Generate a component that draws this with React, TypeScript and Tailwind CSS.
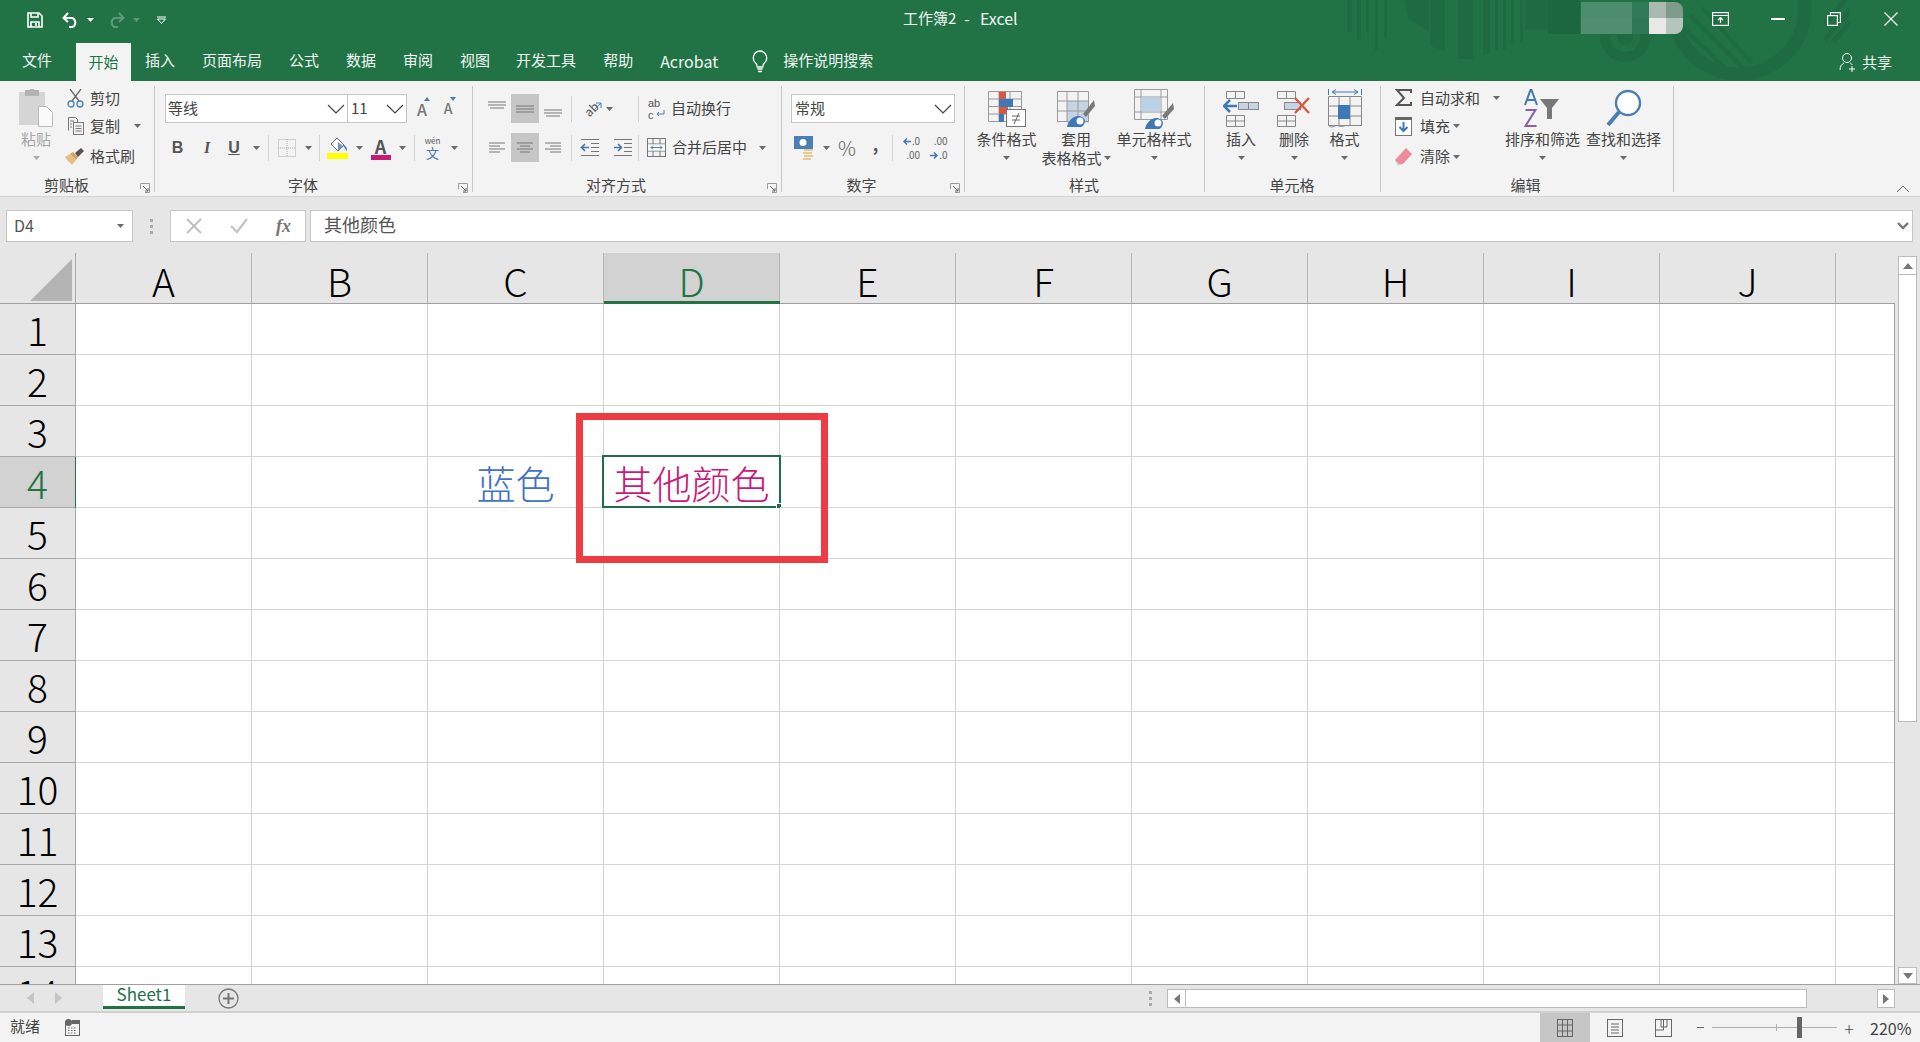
import React from "react";

const Caret = ({ c = "#6a6a6a" }: { c?: string }) => (
  <svg width="7" height="4" viewBox="0 0 7 4" className="shrink-0"><path d="M0 0h7L3.5 4z" fill={c} /></svg>
);
const Chev = () => (
  <svg width="18" height="10" viewBox="0 0 18 10" className="shrink-0"><path d="M1 1l8 8 8-8" fill="none" stroke="#444" strokeWidth="1.2" /></svg>
);
const Sep = () => <div className="w-px h-[26px] bg-[#d2d2d2] shrink-0" />;
const C = ({ w, children, hl }: { w: string; children?: React.ReactNode; hl?: boolean }) => (
  <div className={`${w} h-full shrink-0 flex items-center justify-center ${hl ? "bg-[#c6c6c6]" : ""}`}>{children}</div>
);
const Launcher = () => (
  <svg width="10" height="10" viewBox="0 0 10 10" className="absolute right-[4px] top-[97px]">
    <path d="M0.5 6V0.5H9.5V9.5H5" fill="none" stroke="#9a9a9a" />
    <path d="M3 3l5 5M8 5v3H5" fill="none" stroke="#666" />
  </svg>
);
const Group = ({ w, lw, label, launcher, children }: { w: string; lw: string; label: string; launcher?: boolean; children: React.ReactNode }) => (
  <div className={`${w} relative shrink-0 mt-[5px] h-[106px] border-r border-[#c8c8c8]`}>
    <div className="h-[90px]">{children}</div>
    <div className={`${lw} h-[18px] flex items-center justify-center text-[#444]`}>{label}</div>
    {launcher && <Launcher />}
  </div>
);
const Big = ({ w, icon, children, label2 }: { w: string; icon: React.ReactNode; children: React.ReactNode; label2?: React.ReactNode }) => (
  <div className={`${w} shrink-0 flex flex-col items-center`}>
    <div className="h-[44px] pt-[2px] flex items-center justify-center">{icon}</div>
    <div className="h-[18px] flex items-center whitespace-nowrap">{children}</div>
    <div className="h-[20px] flex items-center whitespace-nowrap">{label2 ?? <Caret />}</div>
  </div>
);
const Lines = ({ d, h = 24 }: { d: string; h?: number }) => (
  <svg width="20" height={h} viewBox={`0 0 20 ${h}`}><path d={d} stroke="#777" strokeWidth="1" fill="none" /></svg>
);

const Save = () => (
  <svg width="16" height="16" viewBox="0 0 16 16" fill="none" stroke="#fff" strokeWidth="1.6">
    <path d="M1 1h11l3 3v11H1z" /><path d="M4 1v4h7V1M4 15v-5h8v5" /><path d="M9 11v3" />
  </svg>
);
const Undo = ({ c = "#fff" }: { c?: string }) => (
  <svg width="18" height="16" viewBox="0 0 18 16" fill="none" stroke={c} strokeWidth="2"><path d="M1.5 6h9a5 5 0 0 1 0 9H7" /><path d="M6 1L1.5 6 6 10" /></svg>
);
const Redo = () => (
  <svg width="18" height="16" viewBox="0 0 18 16" fill="none" stroke="#5d9a79" strokeWidth="2"><path d="M16.5 6h-9a5 5 0 0 0 0 9H11" /><path d="M12 1l4.5 5L12 10" /></svg>
);
const Paste = () => (
  <svg width="34" height="38" viewBox="0 0 34 38">
    <rect x="0" y="3" width="26" height="33" fill="#d6d5d5" />
    <rect x="6" y="1" width="14" height="6" fill="#b3b2b2" />
    <rect x="11" y="0" width="4" height="3" fill="#b3b2b2" />
    <path d="M19.5 17.5h8l6 6v14h-14z" fill="#fafafa" stroke="#bcbcbc" />
  </svg>
);
const Scissors = () => (
  <svg width="17" height="19" viewBox="0 0 17 19" fill="none">
    <path d="M3 0l9 12M14 0L5 12" stroke="#666" strokeWidth="1.3" />
    <circle cx="4" cy="15" r="3" stroke="#4a7eb5" strokeWidth="1.3" /><circle cx="13" cy="15" r="3" stroke="#4a7eb5" strokeWidth="1.3" />
  </svg>
);
const Copy = () => (
  <svg width="17" height="18" viewBox="0 0 17 18" fill="none" stroke="#777">
    <path d="M1.5 13.5V.5h7l2 2v3" /><rect x="6.5" y="5.5" width="10" height="12" fill="#f3f3f3" />
    <path d="M8.5 9h6M8.5 11.5h6M8.5 14h6M3 4h4M3 7h2M3 10h2" />
  </svg>
);
const Brush = () => (
  <svg width="20" height="17" viewBox="0 0 20 17">
    <path d="M0 9l5-3 6 6-4 5C5 14 2 13 0 9z" fill="#e9bd80" />
    <path d="M5 6l3-2 5 5-2 3z" fill="#d9a15c" /><path d="M10 5l6-5 3 3-6 6z" fill="#555" />
  </svg>
);
const BorderIco = () => (
  <svg width="18" height="18" viewBox="0 0 18 18" fill="none" stroke="#a8a8a8" strokeDasharray="1 1"><rect x=".5" y=".5" width="17" height="17" /><path d="M9 0v18M0 9h18" /></svg>
);
const FillIco = () => (
  <svg width="22" height="22" viewBox="0 0 22 22">
    <path d="M10 1l7 7-6 6-7-7z" fill="#fff" stroke="#666" /><path d="M16 8c2 0 4 2 4 5 0 1-1 1-1 0l-2-3z" fill="#4a7eb5" /><path d="M11 5l5 4-5 5" fill="#4a7eb5" opacity=".8" />
    <rect x="0" y="16" width="21" height="6" fill="#ffff00" />
  </svg>
);
const Merge = () => (
  <svg width="19" height="19" viewBox="0 0 19 19" fill="none" stroke="#777">
    <rect x=".5" y=".5" width="18" height="18" /><path d="M0 6h19M0 13h19M6 0v6M13 0v6M6 13v6M13 13v6" />
    <rect x="1" y="6.5" width="17" height="6" fill="#fff" stroke="none" />
    <path d="M4 9.5h11M6 7.5l-2 2 2 2M13 7.5l2 2-2 2" stroke="#4a7eb5" />
  </svg>
);
const Money = () => (
  <svg width="20" height="24" viewBox="0 0 20 24">
    <rect x="0" y="0" width="19" height="13" fill="#4a7eb5" /><circle cx="9" cy="6.5" r="3.5" fill="#fff" />
    <path d="M10 13h9v2h-9zM9 16h9v2H9zM10 19h9v2h-9zM9 22h8v2H9z" fill="#eac98f" />
  </svg>
);
const CondFmt = () => (
  <svg width="38" height="36" viewBox="0 0 38 36" fill="none">
    <path d="M.5.5h33v30H.5zM.5 8h33M.5 15.5h33M.5 23h33M11 0v30M22 0v30" stroke="#9a9a9a" />
    <rect x="11" y="1" width="7" height="7" fill="#d9583f" /><rect x="11" y="8" width="14" height="8" fill="#3f78b5" />
    <rect x="11" y="16" width="9" height="7" fill="#d9583f" /><rect x="11" y="23" width="5" height="8" fill="#3f78b5" />
    <rect x="18.5" y="18.5" width="19" height="17" fill="#fff" stroke="#777" /><path d="M24 25h8M24 29h8M31 22l-5 11" stroke="#666" />
  </svg>
);
const TableFmt = () => (
  <svg width="38" height="36" viewBox="0 0 38 36" fill="none">
    <rect x="10" y="10" width="22" height="22" fill="#c5d3e2" />
    <path d="M.5.5h31v30H.5zM.5 10h31M.5 20h31M10 0v31M21 0v31" stroke="#9a9a9a" />
    <path d="M37 9L26 23l3 3L38 15z" fill="#7a7a7a" />
    <path d="M10 36c1-6 6-11 11-11 3 0 7 2 7 5 0 2-2 6-4 6z" fill="#3f78b5" /><circle cx="23" cy="30" r="3.5" fill="#fff" />
  </svg>
);
const CellFmt = () => (
  <svg width="40" height="40" viewBox="0 0 40 40" fill="none">
    <path d="M.5.5h33v30H.5zM.5 8h33M.5 23h33M7 0v31M27 0v31" stroke="#9a9a9a" />
    <rect x="7.5" y="8.5" width="19" height="14" fill="#bcd0e6" />
    <path d="M39 14L28 27l3 3 9-10z" fill="#7a7a7a" />
    <path d="M11 40c1-6 6-11 11-11 3 0 7 2 7 5 0 2-2 6-4 6z" fill="#3f78b5" /><circle cx="24" cy="34" r="3.5" fill="#fff" />
  </svg>
);
const Insert = () => (
  <svg width="36" height="36" viewBox="0 0 36 36" fill="none" stroke="#888">
    <path d="M3.5 .5h18v7h-18zM12.5 0v7M3.5 24.5h18v11h-18zM3.5 30h18M12.5 24v12" />
    <rect x="15.5" y="11.5" width="20" height="7" fill="#c5d3e2" /><path d="M25.5 11v8" />
    <path d="M14 15H2M7 9l-6 6 6 6" stroke="#3f78b5" strokeWidth="2.5" />
  </svg>
);
const Delete = () => (
  <svg width="36" height="36" viewBox="0 0 36 36" fill="none" stroke="#888">
    <path d="M1.5 .5h18v7h-18zM10.5 0v7M1.5 24.5h18v11h-18zM1.5 30h18M10.5 24v12" />
    <rect x="8.5" y="11.5" width="16" height="7" fill="#c5d3e2" />
    <path d="M19 7l14 15M33 7L19 22" stroke="#d9583f" strokeWidth="2.4" />
  </svg>
);
const FormatI = () => (
  <svg width="34" height="40" viewBox="0 0 34 40" fill="none" stroke="#888">
    <path d="M.5 0v6M33.5 0v6" stroke="#3f78b5" /><path d="M4 3h26M8 .5L4 3l4 2.5M26 .5L30 3l-4 2.5" stroke="#3f78b5" />
    <path d="M.5 7.5h33v29H.5zM.5 17h33M.5 27h33M11 7v30M22 7v30" />
    <rect x="10" y="16" width="12" height="14" fill="#3f78b5" stroke="none" />
    <path d="M1 37c4 3 6-2 10 0s6-2 10 0" />
  </svg>
);
const Sigma = () => (
  <svg width="17" height="18" viewBox="0 0 17 18" fill="none"><path d="M16 4V1H2l7 8-7 7h14v-3" stroke="#555" strokeWidth="2" /></svg>
);
const FillDown = () => (
  <svg width="17" height="19" viewBox="0 0 17 19"><rect x=".5" y=".5" width="16" height="18" fill="#fff" stroke="#777" /><rect width="17" height="3" fill="#666" />
    <path d="M8.5 5v9M4.5 10l4 4 4-4" fill="none" stroke="#3f78b5" strokeWidth="2" /></svg>
);
const Eraser = () => (
  <svg width="17" height="18" viewBox="0 0 17 18"><path d="M11 0l6 6-9 10-5 1-3-5z" fill="#ec8b9b" /><path d="M0 12l5 5-2 1z" fill="#d8d8d8" /></svg>
);
const Funnel = () => (
  <svg width="38" height="40" viewBox="0 0 38 40" className="overflow-visible">
    <path d="M1 16L6.500 1h1L13 16M3 11h8" fill="none" stroke="#3f78b5" strokeWidth="2" />
    <path d="M1.500 21h10L1.500 37h11" fill="none" stroke="#8a5eab" strokeWidth="2" />
    <path d="M16 10h19l-7 9v11h-5V19z" fill="#777" />
  </svg>
);
const Search = () => (
  <svg width="36" height="40" viewBox="0 0 36 40" fill="none"><circle cx="22" cy="14" r="12" fill="#fff" stroke="#4a7eb5" strokeWidth="2.4" /><path d="M13 23L2 36" stroke="#4a7eb5" strokeWidth="4" /></svg>
);
const Person = () => (
  <svg width="18" height="20" viewBox="0 0 18 20" fill="none" stroke="#fff"><circle cx="8" cy="6" r="4.5" /><path d="M1 18c0-4 2-6 4-7M11 11c1 .5 2 1 2 2M13 14v6M10 17h6" /></svg>
);

const Pattern = () => (
  <svg width="520" height="81" viewBox="0 0 520 81" className="absolute left-[1330px] top-0" fill="#1f6b41">
    <path d="M17 0h5v32h-5zM27 0h4v40h-4zM36 0h3v32h-3zM45 0h3v50h-3zM54 0h3v38h-3z" />
    <path d="M75 0h24v32L78 18z" />
    <path d="M100 0h15v52l-15-6zM128 0h15v59h-15zM153 0h7v54h-7zM165 0h3v50h-3zM173 0h3v50h-3zM181 0h3v44h-3zM190 0h3v42h-3z" />
    <path d="M195 0h23v30h-23z" /><path d="M218 0h32v34h-32z" fill="#1c6640" />
    <circle cx="295" cy="37" r="20" fill="none" stroke="#1f6b41" strokeWidth="10" /><circle cx="295" cy="37" r="8" />
    <circle cx="409" cy="8" r="66" fill="none" stroke="#1f6b41" strokeWidth="13" />
    <path d="M350 25l55 52M360 15l55 55M372 8l50 55" fill="none" stroke="#1f6b41" strokeWidth="4" />
    <path d="M495 40l25-30M503 42l17-20M495 25l20-25" fill="none" stroke="#1f6b41" strokeWidth="5" />
  </svg>
);

const tabs: [string, string][] = [
  ["插入", "ml-[14px]"], ["页面布局", "ml-[27px]"], ["公式", "ml-[27px]"], ["数据", "ml-[27px]"], ["审阅", "ml-[27px]"],
  ["视图", "ml-[27px]"], ["开发工具", "ml-[26px]"], ["帮助", "ml-[27px]"],
];
const cols = ["A", "B", "C", "D", "E", "F", "G", "H", "I", "J"];
const rows = Array.from({ length: 14 }, (_, i) => i + 1);

export default function App() {
  return (
    <div className="w-[1920px] h-[1042px] overflow-hidden flex flex-col bg-[#e6e6e6] text-[15px] text-[#444] font-['Noto_Sans_CJK_SC','Noto_Sans',sans-serif]">
      {/* Title + tabs */}
      <div className="relative h-[81px] shrink-0 bg-[#217346] text-[#f2f6f3]">
        <Pattern />
        <div className="relative h-[40px] flex items-start">
          <div className="w-[903px] h-[40px] shrink-0 flex items-center pl-[27px]">
            <Save />
            <div className="ml-[19px]"><Undo /></div>
            <div className="ml-[7px]"><Caret c="#fff" /></div>
            <div className="ml-[13px]"><Redo /></div>
            <div className="ml-[8px]"><Caret c="#5d9a79" /></div>
            <svg width="11" height="8" viewBox="0 0 11 8" className="ml-[16px]" fill="none" stroke="#fff"><path d="M1 1h9M1.5 3h8L5.500 7.500z" /></svg>
          </div>
          <div className="h-[36px] flex items-center whitespace-pre">工作簿2<span className="ml-[8px] text-[16px]">-</span><span className="ml-[10px] text-[16px]">Excel</span></div>
          <div className="flex-1" />
          <div className="w-[102px] h-[32px] mt-[2px] rounded-r-[8px] overflow-hidden grid grid-cols-[51px_17px_17px_17px] grid-rows-2">
            <div className="bg-[#4c8d6d]" /><div className="bg-[#317a58]" /><div className="bg-[#a9bab1]" /><div className="bg-[#7d9a8b]" />
            <div className="bg-[#4f8f70]" /><div className="bg-[#2f7856]" /><div className="bg-[#e8e8e8]" /><div className="bg-[#b5c4bc]" />
          </div>
          <div className="ml-[9px] flex h-[38px] items-center">
            <div className="w-[57px] flex justify-center">
              <svg width="17" height="14" viewBox="0 0 17 14" fill="none" stroke="#fff" strokeWidth="1.2"><rect x=".6" y=".6" width="15.800" height="12.800" /><path d="M.6 3.500h15.800M8.500 11V6M6 8l2.500-2.500L11 8" /></svg>
            </div>
            <div className="w-[57px] flex justify-center"><div className="w-[14px] h-[1.500px] bg-white" /></div>
            <div className="w-[56px] flex justify-center">
              <svg width="14" height="14" viewBox="0 0 14 14" fill="none" stroke="#fff" strokeWidth="1.2"><rect x=".6" y="3.600" width="9.800" height="9.800" /><path d="M3.500 3.500V.6h9.900v9.900H10.500" /></svg>
            </div>
            <div className="w-[58px] flex justify-center">
              <svg width="14" height="14" viewBox="0 0 14 14" fill="none" stroke="#fff" strokeWidth="1.2"><path d="M.5.5l13 13M13.500.5l-13 13" /></svg>
            </div>
          </div>
        </div>
        <div className="relative h-[41px] flex items-end">
          <div className="h-[41px] flex items-center ml-[22px]">文件</div>
          <div className="ml-[24px] w-[55px] h-[38px] bg-[#f3f3f3] text-[#217346] flex items-center justify-center pt-[1px]">开始</div>
          {tabs.map(([t, m]) => (
            <div key={t} className={`${m} h-[41px] flex items-center`}>{t}</div>
          ))}
          <div className="ml-[27px] h-[41px] flex items-center text-[16px]">Acrobat</div>
          <div className="ml-[33px] h-[41px] flex items-center">
            <svg width="18" height="24" viewBox="0 0 18 24" fill="none" stroke="#fff" strokeWidth="1.300"><path d="M9 2a7 7 0 0 0-4 12.500c1 1 1.200 2 1.200 3.500h5.600c0-1.500.2-2.500 1.200-3.500A7 7 0 0 0 9 2z" /><path d="M6.500 20h5M7 22.500h4" /></svg>
          </div>
          <div className="ml-[14px] h-[41px] flex items-center">操作说明搜索</div>
          <div className="flex-1" />
          <div className="h-[41px] pt-[3px] flex items-center pr-[28px]"><Person /><span className="ml-[5px]">共享</span></div>
        </div>
      </div>

      {/* Ribbon */}
      <div className="h-[116px] shrink-0 bg-[#f3f3f3] border-b border-[#d4d4d4] flex">
        <Group w="w-[155px]" lw="w-[133px]" label="剪贴板" launcher>
          <div className="flex">
            <div className="w-[67px] pl-[5px] flex flex-col items-center">
              <div className="h-[44px] flex items-center"><Paste /></div>
              <div className="h-[18px] flex items-center text-[#a6a6a6]">粘贴</div>
              <div className="h-[20px] flex items-center"><Caret c="#aaa" /></div>
            </div>
            <div className="flex flex-col">
              <div className="h-[24px] flex items-center"><div className="w-[23px]"><Scissors /></div>剪切</div>
              <div className="h-[32px] flex items-center"><div className="w-[23px]"><Copy /></div>复制<div className="ml-[14px]"><Caret /></div></div>
              <div className="h-[29px] flex items-center"><div className="-ml-[2px] w-[25px]"><Brush /></div>格式刷</div>
            </div>
          </div>
        </Group>

        <Group w="w-[318px]" lw="w-[296px]" label="字体" launcher>
          <div className="pl-[10px] pt-[8px]">
            <div className="flex h-[29px]">
              <div className="flex h-[29px] bg-white border border-[#c6c6c6]">
                <div className="w-[182px] pl-[2px] pr-[2px] border-r border-[#c6c6c6] flex items-center justify-between"><span>等线</span><Chev /></div>
                <div className="w-[58px] pl-[3px] pr-[2px] flex items-center justify-between"><span>11</span><Chev /></div>
              </div>
              <div className="ml-[2px] w-[26px] relative flex items-center justify-center font-medium text-[16px] text-[#777]">A<svg width="6" height="4" viewBox="0 0 6 4" className="absolute top-[3px] right-[5px]"><path d="M0 4h6L3 0z" fill="#4a7eb5" /></svg></div>
              <div className="w-[26px] relative flex items-center justify-center font-medium text-[14px] text-[#777]">A<svg width="6" height="4" viewBox="0 0 6 4" className="absolute top-[3px] right-[5px]"><path d="M0 0h6L3 4z" fill="#4a7eb5" /></svg></div>
            </div>
            <div className="flex h-[30px] mt-[10px] items-center">
              <C w="w-[25px]"><span className="font-bold text-[16px] text-[#555] font-['Liberation_Sans',sans-serif]">B</span></C>
              <C w="w-[34px]"><span className="font-bold italic text-[16px] text-[#555] font-['Liberation_Serif',serif]">I</span></C>
              <C w="w-[20px]"><span className="font-bold underline text-[16px] text-[#555] font-['Liberation_Sans',sans-serif]">U</span></C>
              <C w="w-[24px]"><Caret /></C>
              <Sep />
              <C w="w-[35px]"><BorderIco /></C>
              <C w="w-[8px]"><Caret /></C>
              <C w="w-[7px]" />
              <Sep />
              <C w="w-[36px]"><FillIco /></C>
              <C w="w-[6px]"><Caret /></C>
              <C w="w-[37px]">
                <div className="flex flex-col items-center leading-none">
                  <span className="font-semibold text-[18px] leading-[18px] text-[#555]">A</span>
                  <div className="w-[20px] h-[5px] bg-[#c91a78]" />
                </div>
              </C>
              <C w="w-[6px]"><Caret /></C>
              <C w="w-[9px]" />
              <Sep />
              <C w="w-[35px]">
                <div className="flex flex-col items-center text-[#3f78b5]">
                  <span className="text-[8px] leading-[10px] text-[#555]">wén</span>
                  <span className="text-[13px] leading-[14px]">文</span>
                </div>
              </C>
              <C w="w-[8px]"><Caret /></C>
            </div>
          </div>
        </Group>

        <Group w="w-[309px]" lw="w-[286px]" label="对齐方式" launcher>
          <div className="pl-[10px] pt-[8px]">
            <div className="flex h-[29px]">
              <C w="w-[28px]"><Lines d="M1 5h18M1 8h18M3 11h14" /></C>
              <C w="w-[28px]" hl><Lines d="M1 9h18M1 12h18M1 15h18" /></C>
              <C w="w-[28px]"><Lines d="M1 13h18M1 16h18M3 19h14" /></C>
              <div className="w-[4px]" />
              <div className="self-center"><Sep /></div>
              <div className="w-[66px] flex items-center pl-[9px]">
                <span className="relative w-[21px] h-[20px] flex items-center justify-center">
                  <span className="-rotate-45 inline-block text-[12px] leading-none text-[#555]">ab</span>
                  <svg width="8" height="8" viewBox="0 0 8 8" className="absolute right-0 top-[3px]" fill="none" stroke="#4a7eb5"><path d="M0 8l7-7M2 1h5v5" /></svg>
                </span>
                <div className="ml-[4px]"><Caret /></div>
              </div>
              <div className="self-center"><Sep /></div>
              <div className="ml-[9px] flex items-center">
                <div className="w-[23px] relative h-[24px]">
                  <span className="absolute left-0 top-0 text-[11px] leading-[12px] text-[#555] font-['Liberation_Sans',sans-serif]">ab</span>
                  <span className="absolute left-0 top-[12px] text-[11px] leading-[12px] text-[#555] font-['Liberation_Sans',sans-serif]">c</span>
                  <svg width="10" height="9" viewBox="0 0 10 9" className="absolute left-[7px] top-[13px]" fill="none" stroke="#4a7eb5"><path d="M9 0v4H2M4 2L2 4l2 2" /></svg>
                </div>
                自动换行
              </div>
            </div>
            <div className="flex h-[29px] mt-[10px] items-center">
              <C w="w-[28px]"><Lines h={18} d="M2 4h16M2 7h11M2 10h16M2 13h11" /></C>
              <C w="w-[28px]" hl><Lines h={18} d="M2 4h16M5 7h10M2 10h16M5 13h10" /></C>
              <C w="w-[28px]"><Lines h={18} d="M2 4h16M7 7h11M2 10h16M7 13h11" /></C>
              <div className="w-[4px]" />
              <Sep />
              <C w="w-[36px]">
                <svg width="20" height="19" viewBox="0 0 20 19" fill="none" stroke="#777"><path d="M1 1.500h18M11 5.500h8M11 9.500h8M11 13.500h8M1 17.500h18" /><path d="M9 9.500H1M5 6L1.500 9.500 5 13" stroke="#3f78b5" strokeWidth="1.600" /></svg>
              </C>
              <C w="w-[30px]">
                <svg width="20" height="19" viewBox="0 0 20 19" fill="none" stroke="#777"><path d="M1 1.500h18M11 5.500h8M11 9.500h8M11 13.500h8M1 17.500h18" /><path d="M1 9.500h8M5 6l3.500 3.500L5 13" stroke="#3f78b5" strokeWidth="1.600" /></svg>
              </C>
              <Sep />
              <div className="ml-[8px] flex items-center">
                <div className="w-[25px]"><Merge /></div>
                合并后居中
                <div className="ml-[12px]"><Caret /></div>
              </div>
            </div>
          </div>
        </Group>

        <Group w="w-[183px]" lw="w-[159px]" label="数字" launcher>
          <div className="pl-[9px] pt-[8px]">
            <div className="w-[164px] h-[29px] bg-white border border-[#c6c6c6] pl-[3px] pr-[2px] flex items-center justify-between"><span>常规</span><Chev /></div>
            <div className="flex h-[30px] mt-[10px] items-center">
              <C w="w-[26px]"><Money /></C>
              <C w="w-[18px]"><Caret /></C>
              <C w="w-[24px]"><span className="text-[20px] text-[#666] font-light">%</span></C>
              <C w="w-[33px]"><span className="font-bold text-[17px] leading-none text-[#555] -mt-[9px]">,</span></C>
              <Sep />
              <C w="w-[37px]">
                <div className="flex flex-col items-end text-[10px] leading-[14px] text-[#666]">
                  <span className="flex items-center"><svg width="8" height="7" viewBox="0 0 8 7" className="mr-[1px]"><path d="M8 3.500H2M4 .5L1 3.500l3 3" fill="none" stroke="#3f78b5" strokeWidth="1.500" /></svg>.0</span><span>.00</span>
                </div>
              </C>
              <C w="w-[18px]">
                <div className="flex flex-col items-end text-[10px] leading-[14px] text-[#666]">
                  <span>.00</span><span className="flex items-center"><svg width="8" height="7" viewBox="0 0 8 7" className="mr-[1px]"><path d="M0 3.500h6M4 .5l3 3-3 3" fill="none" stroke="#3f78b5" strokeWidth="1.500" /></svg>.0</span>
                </div>
              </C>
            </div>
          </div>
        </Group>

        <Group w="w-[240px]" lw="w-[238px]" label="样式">
          <div className="flex">
            <Big w="w-[83px]" icon={<CondFmt />}>条件格式</Big>
            <Big w="w-[56px]" icon={<TableFmt />} label2={<span className="flex items-center">表格格式<span className="ml-[2px]"><Caret /></span></span>}>套用</Big>
            <Big w="w-[100px]" icon={<CellFmt />}>单元格样式</Big>
          </div>
        </Group>

        <Group w="w-[176px]" lw="w-[174px]" label="单元格">
          <div className="flex">
            <Big w="w-[72px]" icon={<Insert />}>插入</Big>
            <Big w="w-[34px]" icon={<Delete />}>删除</Big>
            <Big w="w-[67px]" icon={<FormatI />}>格式</Big>
          </div>
        </Group>

        <Group w="w-[293px]" lw="w-[289px]" label="编辑">
          <div className="flex">
            <div className="w-[124px] pl-[14px] flex flex-col">
              <div className="h-[24px] flex items-center"><div className="w-[25px]"><Sigma /></div>自动求和<div className="ml-[13px]"><Caret /></div></div>
              <div className="h-[32px] flex items-center"><div className="w-[25px]"><FillDown /></div>填充<div className="ml-[3px]"><Caret /></div></div>
              <div className="h-[29px] flex items-center"><div className="w-[25px]"><Eraser /></div>清除<div className="ml-[3px]"><Caret /></div></div>
            </div>
            <Big w="w-[75px]" icon={<Funnel />}>排序和筛选</Big>
            <Big w="w-[87px]" icon={<Search />}>查找和选择</Big>
          </div>
        </Group>

        <div className="flex-1 flex items-end justify-end pr-[10px] pb-[3px]">
          <svg width="14" height="8" viewBox="0 0 14 8" fill="none" stroke="#666"><path d="M1 7l6-6 6 6" /></svg>
        </div>
      </div>

      {/* Formula bar */}
      <div className="h-[56px] shrink-0 bg-[#e6e6e6] pt-[13px] pl-[6px] flex items-start">
        <div className="w-[127px] h-[32px] bg-white border border-[#c6c6c6] pl-[7px] pr-[8px] flex items-center justify-between text-[16px] text-[#555]"><span className="-mt-[2px]">D4</span><Caret /></div>
        <div className="w-[37px] h-[32px] flex flex-col items-center justify-center gap-[3px]">
          <div className="w-[3px] h-[3px] bg-[#aaa]" /><div className="w-[3px] h-[3px] bg-[#aaa]" /><div className="w-[3px] h-[3px] bg-[#aaa]" />
        </div>
        <div className="w-[136px] h-[32px] bg-white border border-[#c6c6c6] flex items-center">
          <C w="w-[44px] ml-[1px]"><svg width="16" height="16" viewBox="0 0 16 16" stroke="#bdbdbd" strokeWidth="1.800" fill="none"><path d="M1 1l14 14M15 1L1 15" /></svg></C>
          <C w="w-[46px]"><svg width="18" height="16" viewBox="0 0 18 16" stroke="#c4c4c4" strokeWidth="2.400" fill="none"><path d="M1 8l6 6L17 1" /></svg></C>
          <C w="w-[43px]"><span className="italic font-bold text-[18px] text-[#777] font-['Liberation_Serif',serif]">fx</span></C>
        </div>
        <div className="ml-[4px] w-[1603px] h-[32px] bg-white border border-[#c6c6c6] pl-[13px] pr-[3px] flex items-center justify-between text-[18px] text-[#555]">
          <span className="-mt-[4px]">其他颜色</span>
          <svg width="12" height="8" viewBox="0 0 12 8" fill="none" stroke="#777" strokeWidth="2.400"><path d="M1 1l5 5 5-5" /></svg>
        </div>
      </div>

      {/* Sheet */}
      <div className="h-[731px] shrink-0 flex relative">
        <div className="w-[1895px] shrink-0 flex flex-col relative">
          <div className="h-[51px] shrink-0 flex border-b border-[#9f9f9f] bg-[#e6e6e6]">
            <div className="w-[76px] shrink-0 flex items-end justify-end pr-[3px] pb-[2px] border-r border-[#a8a8a8]">
              <svg width="42" height="42" viewBox="0 0 42 42"><path d="M42 0v42H0z" fill="#b4b4b4" /></svg>
            </div>
            {cols.map((c) => (
              <div key={c} className={`w-[176px] shrink-0 flex items-center justify-center pt-[5px] text-[39px] leading-none font-light border-r border-[#b4b4b4] ${c === "D" ? "bg-[#d2d2d2] text-[#217346]" : "text-black"}`}>
                {c}
              </div>
            ))}
          </div>
          <div className="h-[680px] overflow-hidden border-r border-[#9f9f9f]">
            {rows.map((r) => (
              <div key={r} className="h-[51px] flex bg-white">
                <div className={`w-[76px] shrink-0 flex items-center justify-center pt-[1px] text-[39px] leading-none font-light border-b border-[#a8a8a8] border-r ${r === 4 ? "bg-[#d2d2d2] text-[#217346] border-r-[#217346]" : "bg-[#e6e6e6] text-black border-r-[#a8a8a8]"}`}>
                  {r}
                </div>
                {cols.map((c) => (
                  <div key={c} className="w-[176px] shrink-0 relative flex items-center justify-center border-r border-b border-[#d4d4d4] text-[39px] leading-none font-light whitespace-nowrap">
                    {r === 4 && c === "C" && <span className="text-[#4472c4]">蓝色</span>}
                    {r === 4 && c === "D" && <span className="text-[#c91a78]">其他颜色</span>}
                    {r === 4 && c === "D" && (
                      <div className="absolute -left-[2px] -top-[2px] w-[179px] h-[53px] border-2 border-[#1f6e4b]">
                        <div className="absolute -right-[3px] -bottom-[3px] w-[6px] h-[6px] bg-[#1f6e4b] border border-white" />
                      </div>
                    )}
                  </div>
                ))}
                <div className="flex-1 border-b border-[#d4d4d4]" />
              </div>
            ))}
          </div>
          <div className="absolute left-[604px] top-[48px] w-[176px] h-[3px] bg-[#217346]" />
          <div className="absolute left-[576px] top-[160px] w-[252px] h-[150px] border-[7px] border-[#ee3d42]" />
        </div>
        <div className="flex-1 pl-[3px] pr-[3px] pt-[3px] flex flex-col">
          <div className="h-[19px] bg-white border border-[#bcbcbc] flex items-center justify-center"><svg width="10" height="6" viewBox="0 0 10 6"><path d="M0 6h10L5 0z" fill="#777" /></svg></div>
          <div className="h-[447px] bg-white border-x border-b border-[#bcbcbc]" />
          <div className="flex-1" />
          <div className="h-[17px] bg-white border border-[#bcbcbc] flex items-center justify-center"><svg width="10" height="6" viewBox="0 0 10 6"><path d="M0 0h10L5 6z" fill="#777" /></svg></div>
        </div>
      </div>

      {/* Sheet tabs */}
      <div className="h-[29px] shrink-0 bg-[#e6e6e6] border-t border-[#9f9f9f] border-b-2 border-b-[#d0d0d0] flex items-start">
        <div className="w-[103px] h-[26px] flex items-center">
          <svg width="7" height="12" viewBox="0 0 7 12" className="ml-[27px]"><path d="M7 0v12L0 6z" fill="#c4c4c4" /></svg>
          <svg width="7" height="12" viewBox="0 0 7 12" className="ml-[21px]"><path d="M0 0v12l7-6z" fill="#c4c4c4" /></svg>
        </div>
        <div className="w-[82px] h-[24px] pb-[5px] bg-white border-b-[3px] border-[#217346] flex items-center justify-center text-[#217346] text-[17px] leading-none">Sheet1</div>
        <div className="ml-[33px] h-[27px] flex items-center">
          <svg width="21" height="21" viewBox="0 0 21 21" fill="none" stroke="#777" strokeWidth="1.300"><circle cx="10.500" cy="10.500" r="9.500" /><path d="M10.500 5v11M5 10.500h11" strokeWidth="2" /></svg>
        </div>
        <div className="flex-1" />
        <div className="h-[27px] w-[16px] flex flex-col items-center justify-center gap-[3px]">
          <div className="w-[3px] h-[3px] bg-[#aaa]" /><div className="w-[3px] h-[3px] bg-[#aaa]" /><div className="w-[3px] h-[3px] bg-[#aaa]" />
        </div>
        <div className="ml-[9px] mt-[4px] w-[728px] h-[19px] flex mr-[25px]">
          <div className="w-[19px] bg-white border border-[#bcbcbc] flex items-center justify-center"><svg width="6" height="10" viewBox="0 0 6 10"><path d="M6 0v10L0 5z" fill="#777" /></svg></div>
          <div className="w-[621px] bg-white border-y border-r border-[#bcbcbc]" />
          <div className="flex-1" />
          <div className="w-[18px] bg-white border border-[#bcbcbc] flex items-center justify-center"><svg width="6" height="10" viewBox="0 0 6 10"><path d="M0 0v10l6-5z" fill="#777" /></svg></div>
        </div>
      </div>

      {/* Status */}
      <div className="h-[29px] shrink-0 bg-[#f3f3f3] flex items-center text-[#444]">
        <span className="ml-[10px] -mt-[2px]">就绪</span>
        <svg width="15" height="17" viewBox="0 0 15 17" className="ml-[25px]" fill="none" stroke="#666">
          <rect x=".5" y="2.500" width="14" height="14" /><path d="M3 9h9M3 11.500h9M3 14h9" strokeDasharray="1.500 1.500" /><circle cx="3.500" cy="3.500" r="3.500" fill="#666" stroke="none" /><rect x="7" y="1" width="8" height="4" fill="#666" stroke="none" />
        </svg>
        <div className="flex-1" />
        <div className="h-[29px] flex items-center">
          <div className="w-[50px] h-[29px] bg-[#c6c6c6] flex items-center justify-center">
            <svg width="16" height="18" viewBox="0 0 16 18" fill="none" stroke="#666"><rect x=".5" y=".5" width="15" height="17" /><path d="M0 6h16M0 12h16M5.500 0v18M10.500 0v18" /></svg>
          </div>
          <div className="w-[49px] flex items-center justify-center">
            <svg width="16" height="18" viewBox="0 0 16 18" fill="none" stroke="#666"><rect x=".5" y=".5" width="15" height="17" /><path d="M4 5h8M4 8h8M4 11h8M4 14h8" /></svg>
          </div>
          <div className="w-[49px] flex items-center justify-center">
            <svg width="17" height="18" viewBox="0 0 17 18" fill="none" stroke="#666"><rect x=".5" y=".5" width="16" height="17" /><path d="M0 11h8.500V0M6 0v8h6V0" /></svg>
          </div>
          <div className="ml-[9px] w-[7px] h-[1.500px] bg-[#666]" />
          <div className="ml-[8px] w-[125px] h-[13px] relative flex items-center">
            <div className="w-full h-px bg-[#b0b0b0]" />
            <div className="absolute left-[64px] top-[3px] w-px h-[7px] bg-[#b0b0b0]" />
            <div className="absolute left-[85px] -top-[4px] w-[5px] h-[21px] bg-[#666]" />
          </div>
          <div className="ml-[7px] text-[18px] leading-none text-[#555] font-light">+</div>
          <div className="ml-[16px] mr-[10px] text-[16px] w-[40px] text-[#444]">220%</div>
        </div>
      </div>
    </div>
  );
}
